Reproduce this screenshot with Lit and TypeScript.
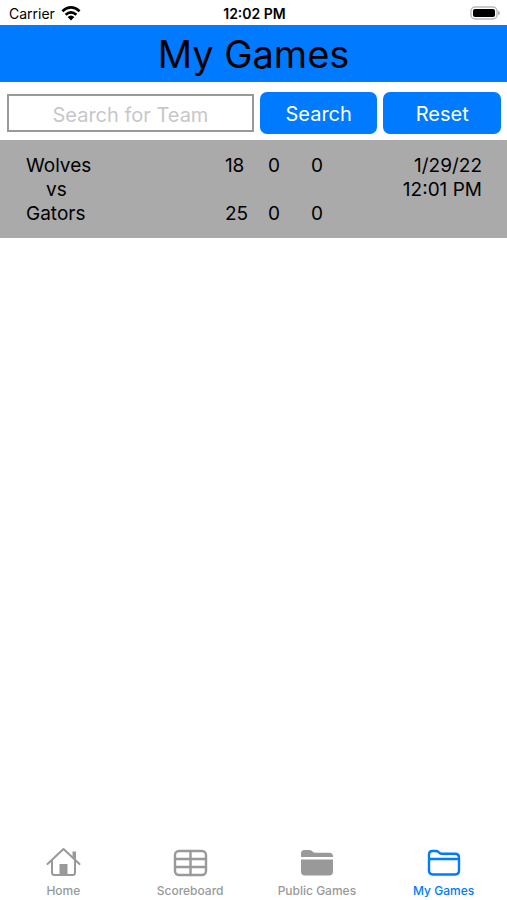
import { LitElement, html, css, svg } from "lit";
import { customElement, property, state } from "lit/decorators.js";
import { classMap } from "lit/directives/class-map.js";

interface Game {
  home: string;
  away: string;
  homeScores: number[];
  awayScores: number[];
  date: string;
  time: string;
}

const GAMES: Game[] = [
  {
    home: "Wolves",
    away: "Gators",
    homeScores: [18, 0, 0],
    awayScores: [25, 0, 0],
    date: "1/29/22",
    time: "12:01 PM",
  },
];

const ICONS = {
  home: svg`
    <g stroke-width="2">
      <path d="M2.5 17 L18.5 2 L34.5 17" />
      <path d="M7 14 V25.5 Q7 28 9.5 28 H27.5 Q30 28 30 25.5 V14" />
    </g>
    <path class="solid" d="M14.5 17 H22.5 V28 H14.5 Z M27.5 4.5 H31 V13 L27.5 10 Z" />`,
  table: svg`
    <rect x="3" y="4" width="31" height="24" rx="4" />
    <path d="M3 12 H34 M3 20 H34 M18.5 4 V28" />`,
  folderFill: svg`
    <path class="solid" d="M2 10 V6.5 Q2 3 5.5 3 H10 Q12 3 13 4 L14 5 Q15 5.8 16.5 5.8 H30 Q34 5.8 34 9.5 V10 Z" />
    <path class="solid" d="M2 12.6 H34 V24.5 Q34 28.5 30 28.5 H6 Q2 28.5 2 24.5 Z" />`,
  folder: svg`
    <path d="M3 12 V7.5 Q3 4 6.5 4 H10 Q11.5 4 12.5 5 L13.5 6 Q14.5 6.8 16 6.8 H29 Q33 6.8 33 10.5 V23.5 Q33 27.5 29 27.5 H7 Q3 27.5 3 23.5 V12 H33" />`,
};

const TABS: { label: string; icon: keyof typeof ICONS }[] = [
  { label: "Home", icon: "home" },
  { label: "Scoreboard", icon: "table" },
  { label: "Public Games", icon: "folderFill" },
  { label: "My Games", icon: "folder" },
];

@customElement("status-bar")
class StatusBar extends LitElement {
  static styles = css`
    :host {
      display: grid;
      grid-template-columns: 1fr auto 1fr;
      align-items: center;
      height: 25px;
      padding: 1px 7px 0 9px;
      box-sizing: border-box;
      font-size: 14px;
    }
    .carrier {
      display: flex;
      align-items: center;
      gap: 6px;
    }
    .clock {
      font-weight: 600;
    }
    .battery {
      justify-self: end;
    }
    svg {
      display: block;
    }
  `;

  render() {
    return html`
      <span class="carrier">
        Carrier
        <svg width="20" height="15" viewBox="0 0 20 15" aria-label="Wi-Fi">
          <g fill="none" stroke="#000" stroke-width="2.6">
            <path d="M1.4 5.2 Q10 -2.4 18.6 5.2" />
            <path d="M4.6 8.8 Q10 3.8 15.4 8.8" />
          </g>
          <path d="M6.6 11 Q10 8 13.4 11 L10 14.4 Z" />
        </svg>
      </span>
      <span class="clock">12:02 PM</span>
      <svg class="battery" width="30" height="15" viewBox="1 0 30 15" aria-label="Battery full">
        <rect x="2" y="1" width="26" height="12" rx="4" fill="#fff" stroke="#bbb" stroke-width="1.4" />
        <rect x="4" y="3" width="22" height="8" rx="2" />
        <path d="M29.2 4.8 Q31 5.6 31 7 Q31 8.4 29.2 9.2 Z" fill="#aaa" />
      </svg>
    `;
  }
}

@customElement("game-row")
class GameRow extends LitElement {
  @property({ attribute: false }) game!: Game;

  static styles = css`
    :host {
      display: grid;
      grid-template-columns: 5fr auto 4fr;
      padding: 14px 25px 12px 26px;
      background: #aaa;
      font-size: 19px;
      line-height: 24px;
    }
    .teams {
      display: flex;
      flex-direction: column;
    }
    .versus {
      padding-left: 20px;
    }
    .scores {
      display: grid;
      grid-template-columns: 43px 43px 12px;
      grid-template-rows: repeat(3, 24px);
    }
    .away {
      grid-row: 3;
    }
    .when {
      text-align: right;
    }
  `;

  render() {
    const g = this.game;
    return html`
      <div class="teams">
        <span>${g.home}</span>
        <span class="versus">vs</span>
        <span>${g.away}</span>
      </div>
      <div class="scores">
        ${g.homeScores.map((n) => html`<span>${n}</span>`)}
        ${g.awayScores.map((n) => html`<span class="away">${n}</span>`)}
      </div>
      <div class="when">
        <div>${g.date}</div>
        <div>${g.time}</div>
      </div>
    `;
  }
}

@customElement("app-root")
class AppRoot extends LitElement {
  @state() private tab = "My Games";
  @state() private query = "";
  @state() private filter = "";

  static styles = css`
    :host {
      display: flex;
      flex-direction: column;
      min-height: 100vh;
      background: #fff;
      color: #000;
      font-family: Inter, "Liberation Sans", sans-serif;
    }
    h1 {
      margin: 0;
      padding: 5px 0 4px;
      background: #007aff;
      font-size: 38px;
      line-height: 48px;
      font-weight: 400;
      text-align: center;
    }
    .search {
      display: grid;
      grid-template-columns: 21fr 10fr 10fr;
      align-items: center;
      gap: 6px;
      padding: 10px 6px 6px 7px;
    }
    input,
    button {
      box-sizing: border-box;
      width: 100%;
      min-width: 0;
      margin: 0;
      font: inherit;
    }
    .field {
      height: 38px;
      padding: 4px 0 0;
      border: 2px solid #999;
      border-radius: 0;
      background: #fff;
      font-size: 20px;
      text-align: center;
      outline: none;
    }
    .field::placeholder {
      color: #c7c7c9;
    }
    .action {
      height: 42px;
      padding: 2px 0 0;
      border: 0;
      border-radius: 7px;
      background: #007aff;
      color: #fff;
      font-size: 20px;
    }
    main {
      flex: 1;
    }
    .tabs {
      display: grid;
      grid-template-columns: repeat(4, 1fr);
      padding-bottom: 1px;
    }
    .tab {
      display: flex;
      flex-direction: column;
      align-items: center;
      gap: 4px;
      padding: 0;
      border: 0;
      background: none;
      color: #999;
      font-size: 12px;
      line-height: 16px;
      font-weight: 500;
    }
    .tab.active {
      color: #007aff;
    }
    .tab svg {
      fill: none;
      stroke: currentColor;
      stroke-width: 2.4;
      stroke-linejoin: round;
      stroke-linecap: round;
    }
    .tab .solid {
      fill: currentColor;
      stroke: none;
    }
  `;

  private submit(e: Event) {
    e.preventDefault();
    this.filter = this.query.trim().toLowerCase();
  }

  private reset() {
    this.query = "";
    this.filter = "";
  }

  render() {
    const games = GAMES.filter((g) => `${g.home} ${g.away}`.toLowerCase().includes(this.filter));
    return html`
      <status-bar></status-bar>
      <h1>My Games</h1>
      <form class="search" @submit=${this.submit}>
        <input
          class="field"
          type="text"
          aria-label="Search for Team"
          placeholder="Search for Team"
          .value=${this.query}
          @input=${(e: Event) => (this.query = (e.target as HTMLInputElement).value)}
        />
        <button class="action" type="submit">Search</button>
        <button class="action" type="button" @click=${this.reset}>Reset</button>
      </form>
      <main>${games.map((g) => html`<game-row .game=${g}></game-row>`)}</main>
      <nav class="tabs">
        ${TABS.map(
          (t) => html`
            <button
              class=${classMap({ tab: true, active: t.label === this.tab })}
              @click=${() => (this.tab = t.label)}
            >
              <svg width="36" height="32" viewBox="0 0 36 32" aria-hidden="true">${ICONS[t.icon]}</svg>
              <span>${t.label}</span>
            </button>
          `
        )}
      </nav>
    `;
  }
}
